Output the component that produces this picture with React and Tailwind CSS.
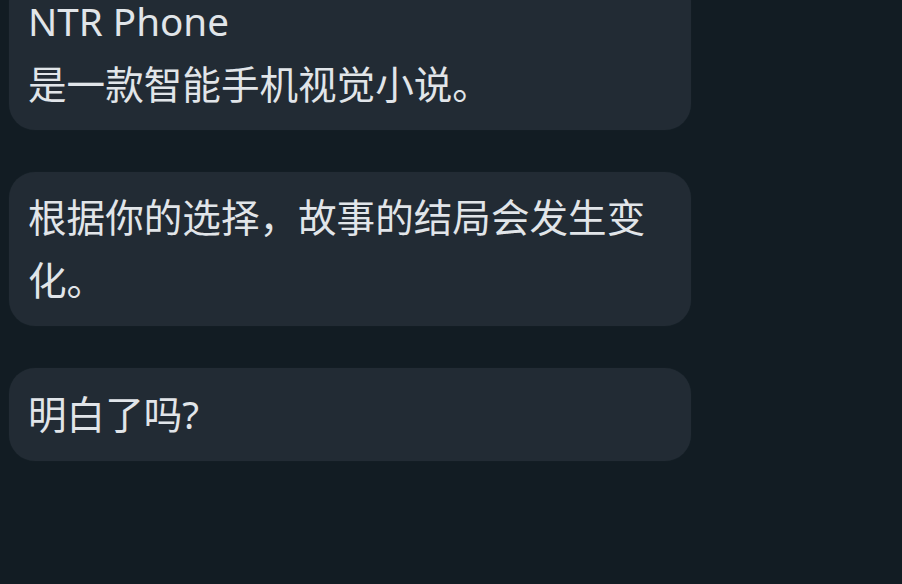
import React from "react";

const messages = [
  ["NTR Phone", "是一款智能手机视觉小说。"],
  ["根据你的选择，故事的结局会发生变化。"],
  ["明白了吗?"],
];

const App = () => {
  return (
    <div className="w-[902px] h-[584px] overflow-hidden bg-[#121c23] font-['Noto_Sans','Noto_Sans_CJK_SC',sans-serif]">
      <div className="flex flex-col gap-[42px] pl-[9px] -mt-[24px]">
        {messages.map((lines, i) => (
          <div
            key={i}
            className="w-[682px] rounded-[26px] bg-[#222b34] px-[19px] py-[14px] last:py-[15px] text-[38.6px] leading-[63px] text-[#e1e5e9] shadow-[0_0_2px_rgba(255,255,255,0.04)]"
          >
            {lines.map((line) => (
              <div key={line}>{line}</div>
            ))}
          </div>
        ))}
      </div>
    </div>
  );
};

export default App;
